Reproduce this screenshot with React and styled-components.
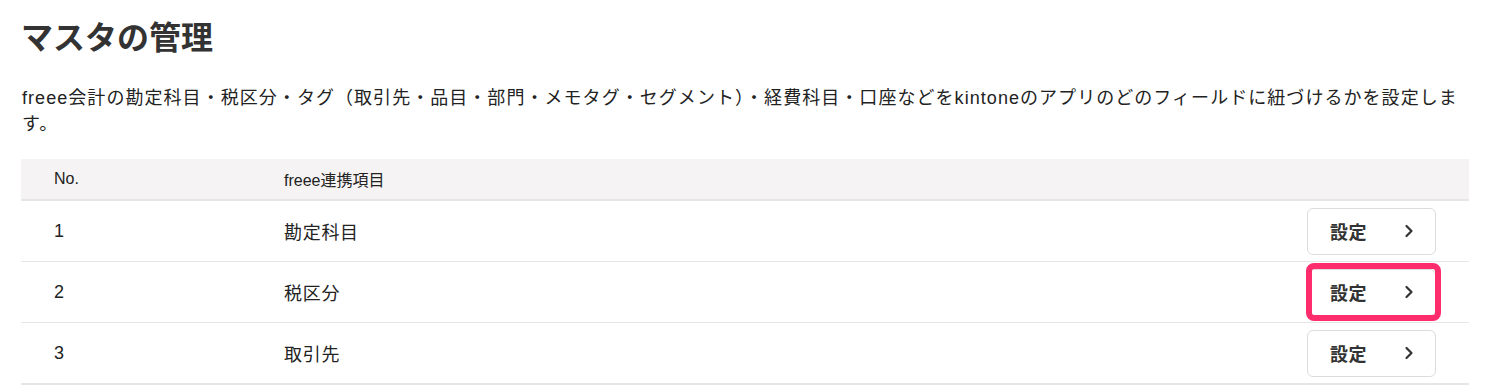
import styled, { createGlobalStyle } from "styled-components";

const GlobalStyle = createGlobalStyle`
  body {
    margin: 0;
    background: #fff;
    font-family: "Liberation Sans", "Noto Sans CJK JP", sans-serif;
    color: #222;
  }
`;

const Page = styled.div`
  padding: 14px 21px 0 21px;
`;

const Title = styled.h1`
  margin: 0;
  font-size: 32px;
  line-height: 48px;
  font-weight: 700;
  color: #333;
`;

const Description = styled.p`
  margin: 23px 0 0 1px;
  font-size: 18px;
  line-height: 26px;
  letter-spacing: 1.05px;
  color: #222;
`;

const Table = styled.div`
  margin-top: 22px;
  border-bottom: 2px solid #e6e6e6;
`;

const Row = styled.div`
  display: grid;
  grid-template-columns: 263px 1fr auto;
  align-items: center;
  height: ${(p) => (p.$head ? "40px" : "60px")};
  background: ${(p) => (p.$head ? "#f5f3f3" : "#fff")};
  border-bottom: ${(p) => (p.$head ? "2px solid #e6e6e6" : "1px solid #e6e6e6")};
  font-size: ${(p) => (p.$head ? "16px" : "18px")};
  letter-spacing: ${(p) => (p.$head ? "0" : "0.7px")};
  color: #222;

  &:last-child {
    border-bottom: none;
  }
`;

const Cell = styled.div`
  padding-left: ${(p) => (p.$first ? "33px" : "0")};
  padding-right: ${(p) => (p.$last ? "33px" : "0")};
`;

const SettingButton = styled.button`
  position: relative;
  display: flex;
  align-items: center;
  justify-content: space-between;
  width: 129px;
  height: 47px;
  padding: 0 21px 0 22px;
  border: 1px solid #dcdcdc;
  border-radius: 6px;
  background: #fff;
  font-family: inherit;
  font-size: 18px;
  font-weight: 700;
  letter-spacing: 0.5px;
  color: #333;
  cursor: pointer;
`;

const Highlight = styled.span`
  position: absolute;
  left: -2px;
  right: -6px;
  top: -7px;
  bottom: -6px;
  border: 6px solid #ff2d6b;
  border-radius: 8px;
  pointer-events: none;
`;

const Chevron = () => (
  <svg width="10" height="14" viewBox="0 0 10 14" fill="none">
    <path d="M2.5 2 L7.5 7 L2.5 12" stroke="#333" strokeWidth="2.2" strokeLinecap="round" strokeLinejoin="round" />
  </svg>
);

const rows = [
  { no: 1, name: "勘定科目" },
  { no: 2, name: "税区分", highlight: true },
  { no: 3, name: "取引先" },
];

export default function App() {
  return (
    <Page>
      <GlobalStyle />
      <Title>マスタの管理</Title>
      <Description>
        freee会計の勘定科目・税区分・タグ（取引先・品目・部門・メモタグ・セグメント）・経費科目・口座などをkintoneのアプリのどのフィールドに紐づけるかを設定します。
      </Description>
      <Table>
        <Row $head>
          <Cell $first>No.</Cell>
          <Cell>freee連携項目</Cell>
          <Cell $last />
        </Row>
        {rows.map((r) => (
          <Row key={r.no}>
            <Cell $first>{r.no}</Cell>
            <Cell>{r.name}</Cell>
            <Cell $last>
              <SettingButton>
                <span>設定</span>
                <Chevron />
                {r.highlight && <Highlight />}
              </SettingButton>
            </Cell>
          </Row>
        ))}
      </Table>
    </Page>
  );
}
